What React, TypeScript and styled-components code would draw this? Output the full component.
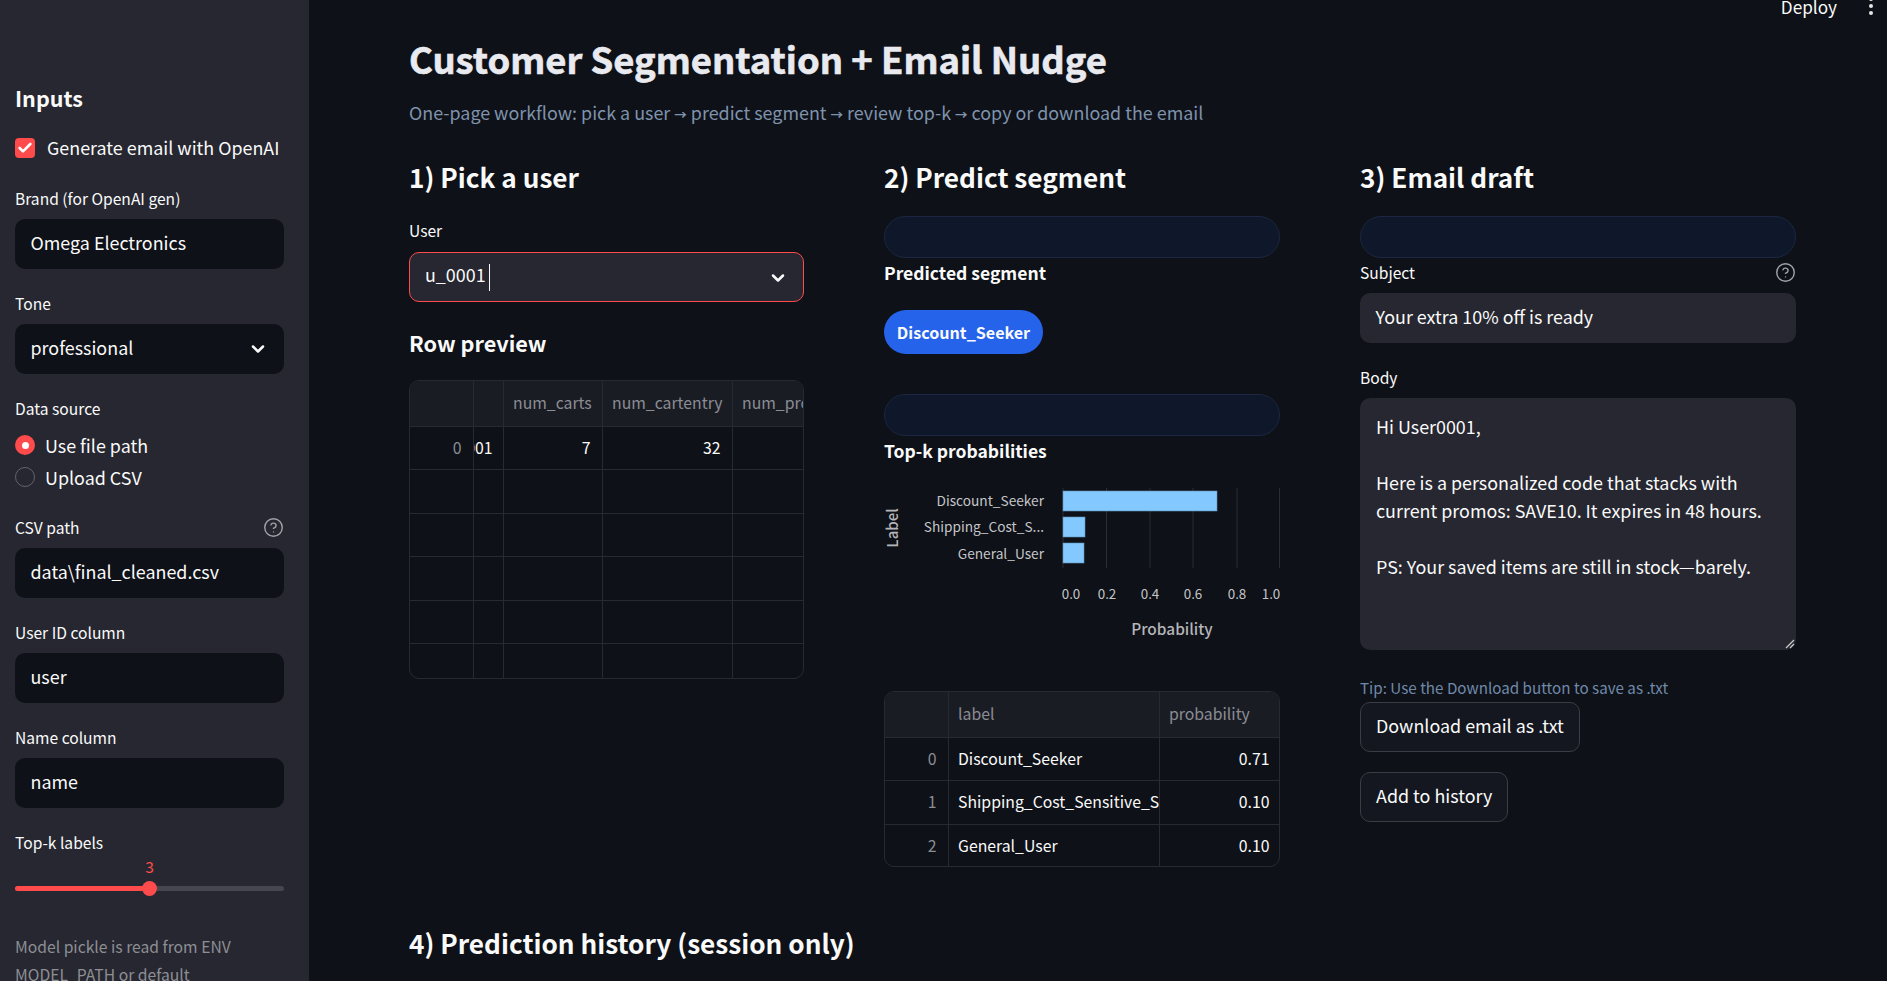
import React from "react";
import styled, { createGlobalStyle } from "styled-components";
import { ChevronDown, CircleHelp, Check } from "lucide-react";

const FONT = `"Noto Sans CJK SC", "Noto Sans", sans-serif`;

const GlobalStyle = createGlobalStyle`
  html, body { margin: 0; padding: 0; background: #0e1117; height: 100%; overflow: hidden; }
  * { box-sizing: border-box; }
  body { font-family: ${FONT}; color: #fafafa; }
`;

export default function App() {
  return (
    <Page>
      <GlobalStyle />
      <Sidebar>
        <SideTitle>Inputs</SideTitle>
        <CheckRow>
          <CheckBox><Check size={16} strokeWidth={4} color="#fff" /></CheckBox>
          <CheckText>Generate email with OpenAI</CheckText>
        </CheckRow>
        <Field><Label>Brand (for OpenAI gen)</Label><Box>Omega Electronics</Box></Field>
        <Field>
          <Label>Tone</Label>
          <Box>professional<Chevron size={20} strokeWidth={3} /></Box>
        </Field>
        <Field>
          <Label>Data source</Label>
          <div>
            <RadioRow><RadioDot $on />Use file path</RadioRow>
            <RadioRow><RadioDot />Upload CSV</RadioRow>
          </div>
        </Field>
        <Field>
          <Label>CSV path<Help size={21} strokeWidth={1.6} /></Label>
          <Box>data\final_cleaned.csv</Box>
        </Field>
        <Field><Label>User ID column</Label><Box>user</Box></Field>
        <Field><Label>Name column</Label><Box>name</Box></Field>
        <Field>
          <Label>Top-k labels</Label>
          <SliderValue>3</SliderValue>
          <SliderTrack><SliderFill /><SliderThumb /></SliderTrack>
        </Field>
        <SideNote>Model pickle is read from ENV<br />MODEL_PATH or default</SideNote>
      </Sidebar>

      <Main>
        <Toolbar>
          Deploy
          <Dots><i /><i /><i /></Dots>
        </Toolbar>
        <Title>Customer Segmentation + Email Nudge</Title>
        <Subtitle>
          One-page workflow: pick a user <Arrow>→</Arrow> predict segment <Arrow>→</Arrow> review top-k <Arrow>→</Arrow> copy or download the email
        </Subtitle>

        <Columns>
          <Column>
            <Heading>1) Pick a user</Heading>
            <UserField>
              <UserLabel>User</UserLabel>
              <UserSelect>
                <span>u_0001<Caret /></span>
                <Chevron size={20} strokeWidth={3} />
              </UserSelect>
            </UserField>
            <SubHeading>Row preview</SubHeading>
            <TableWrap>
              <DataTable $width={443}>
                <colgroup>
                  <col width={63} /><col width={30} /><col width={99} /><col width={130} /><col width={121} />
                </colgroup>
                <thead>
                  <tr><Th /><Th /><Th>num_carts</Th><Th>num_cartentry</Th><Th>num_products</Th></tr>
                </thead>
                <tbody>
                  <tr>
                    <IndexCell>0</IndexCell>
                    <ClipCell><Clip>u_0001</Clip></ClipCell>
                    <Td $num>7</Td>
                    <Td $num>32</Td>
                    <Td />
                  </tr>
                  {[0, 1, 2, 3, 4].map((i) => (
                    <tr key={i}><IndexCell /><Td /><Td /><Td /><Td /></tr>
                  ))}
                </tbody>
              </DataTable>
            </TableWrap>
          </Column>

          <Column>
            <Heading>2) Predict segment</Heading>
            <EmptyPill />
            <BoldLine>Predicted segment</BoldLine>
            <SegmentBadge>Discount_Seeker</SegmentBadge>
            <EmptyPill />
            <BoldLine>Top-k probabilities</BoldLine>
            <ChartSvg width="396" height="176" viewBox="0 0 396 176">
              {[179, 222.5, 266, 309, 353, 395.5].map((x) => (
                <line key={x} x1={x} x2={x} y1="16" y2="96" stroke="#2a2d36" strokeWidth="1" />
              ))}
              <rect x="179" y="19" width="154" height="20" fill="#83c9ff" stroke="#5f8fb4" strokeWidth="0.6" />
              <rect x="179" y="45" width="22" height="20" fill="#83c9ff" stroke="#5f8fb4" strokeWidth="0.6" />
              <rect x="179" y="71" width="21" height="20" fill="#83c9ff" stroke="#5f8fb4" strokeWidth="0.6" />
              <g fontFamily={FONT} fontSize="13.7" fill="#c4c5c9" textAnchor="end">
                <text x="160" y="34">Discount_Seeker</text>
                <text x="160" y="60">Shipping_Cost_S...</text>
                <text x="160" y="87">General_User</text>
              </g>
              <g fontFamily={FONT} fontSize="13.4" fill="#c4c5c9" textAnchor="middle">
                <text x="187" y="127">0.0</text>
                <text x="223" y="127">0.2</text>
                <text x="266" y="127">0.4</text>
                <text x="309" y="127">0.6</text>
                <text x="353" y="127">0.8</text>
                <text x="387" y="127">1.0</text>
              </g>
              <text x="288" y="163" fontFamily={FONT} fontSize="15.4" fontWeight="500" fill="#b4b5b9" textAnchor="middle">Probability</text>
              <text transform="translate(14 56) rotate(-90)" fontFamily={FONT} fontSize="15" fontWeight="500" fill="#b4b5b9" textAnchor="middle">Label</text>
            </ChartSvg>
            <ProbWrap>
              <DataTable $width={396}>
                <colgroup><col width={63} /><col width={211} /><col width={122} /></colgroup>
                <thead><tr><Th /><Th>label</Th><Th>probability</Th></tr></thead>
                <tbody>
                  <tr><IndexCell>0</IndexCell><Td>Discount_Seeker</Td><Td $num>0.71</Td></tr>
                  <tr><IndexCell>1</IndexCell><Td>Shipping_Cost_Sensitive_Shopper</Td><Td $num>0.10</Td></tr>
                  <tr><IndexCell>2</IndexCell><Td>General_User</Td><Td $num>0.10</Td></tr>
                </tbody>
              </DataTable>
            </ProbWrap>
          </Column>

          <Column>
            <Heading>3) Email draft</Heading>
            <EmptyPill />
            <SubjectLabel>Subject<Help size={21} strokeWidth={1.6} /></SubjectLabel>
            <Box $raised>Your extra 10% off is ready</Box>
            <BodyField>
              <Label>Body</Label>
              <BodyArea>
                {"Hi User0001,\n\nHere is a personalized code that stacks with current promos: SAVE10. It expires in 48 hours.\n\nPS: Your saved items are still in stock—barely."}
                <Grip width="10" height="10" viewBox="0 0 10 10">
                  <path d="M1 9 L9 1 M5 9 L9 5" stroke="#c8c8c8" strokeWidth="1.3" />
                </Grip>
              </BodyArea>
            </BodyField>
            <Tip>Tip: Use the Download button to save as .txt</Tip>
            <ActionButton>Download email as .txt</ActionButton>
            <ActionButton>Add to history</ActionButton>
          </Column>
        </Columns>

        <HistoryHeading>4) Prediction history (session only)</HistoryHeading>
      </Main>
    </Page>
  );
}

const Page = styled.div`
  display: flex;
  width: 1887px;
  height: 981px;
  overflow: hidden;
  background: #0e1117;
`;

const Sidebar = styled.aside`
  width: 309px;
  flex: none;
  background: #262730;
  padding: 81px 25px 0 15px;
`;

const SideTitle = styled.h2`
  margin: 0 0 23px;
  font-size: 21.5px;
  line-height: 34px;
  font-weight: 600;
`;

const CheckRow = styled.div`
  display: flex;
  align-items: center;
  gap: 12px;
  height: 20px;
  margin-bottom: 31px;
  font-size: 17.9px;
`;

const CheckText = styled.span`
  padding-bottom: 2px;
`;

const CheckBox = styled.span`
  width: 20px;
  height: 20px;
  border-radius: 4px;
  background: #ff4b4b;
  display: flex;
  align-items: center;
  justify-content: center;
`;

const Field = styled.div`
  margin-bottom: 25px;
`;

const Label = styled.div`
  display: flex;
  align-items: center;
  justify-content: space-between;
  height: 20px;
  margin-bottom: 10px;
  padding-bottom: 2px;
  font-size: 15.6px;
  line-height: 20px;
  color: #fafafa;
`;

const SubjectLabel = styled(Label)`
  margin-top: 5px;
`;

const UserLabel = styled(Label)`
  margin-bottom: 11px;
`;

const Help = styled(CircleHelp)`
  color: #a3a4a9;
`;

const Chevron = styled(ChevronDown)`
  margin-bottom: -4px;
`;

const Box = styled.div<{ $raised?: boolean }>`
  display: flex;
  align-items: center;
  justify-content: space-between;
  height: 50px;
  padding: 0 16px 4px 15.5px;
  border-radius: 10px;
  background: ${(p) => (p.$raised ? "#262730" : "#0e1117")};
  font-size: 17.9px;
  color: #fafafa;
`;

const RadioRow = styled.div`
  display: flex;
  align-items: center;
  gap: 10px;
  height: 32px;
  font-size: 17.9px;
`;

const RadioDot = styled.span<{ $on?: boolean }>`
  width: 20px;
  height: 20px;
  border-radius: 50%;
  background: ${(p) => (p.$on ? "#ff4b4b" : "transparent")};
  border: ${(p) => (p.$on ? "none" : "1px solid #62636b")};
  display: flex;
  align-items: center;
  justify-content: center;
  &::after {
    content: "";
    display: ${(p) => (p.$on ? "block" : "none")};
    width: 7px;
    height: 7px;
    border-radius: 50%;
    background: #fff;
  }
`;

const SliderValue = styled.div`
  margin-top: -7px;
  text-align: center;
  font-size: 15.6px;
  line-height: 20px;
  color: #ff4b4b;
`;

const SliderTrack = styled.div`
  position: relative;
  height: 5px;
  margin-top: 10px;
  border-radius: 3px;
  background: #45464f;
`;

const SliderFill = styled.div`
  width: 50%;
  height: 100%;
  border-radius: 3px;
  background: #ff4b4b;
`;

const SliderThumb = styled.div`
  position: absolute;
  left: 127px;
  top: -5px;
  width: 15px;
  height: 15px;
  border-radius: 50%;
  background: #ff4b4b;
`;

const SideNote = styled.div`
  margin-top: 42px;
  font-size: 15.7px;
  line-height: 28px;
  color: #8e8f95;
`;

const Main = styled.main`
  position: relative;
  flex: 1;
  min-width: 0;
  padding: 30px 91px 0 100px;
`;

const Toolbar = styled.div`
  position: absolute;
  top: -5px;
  right: 14px;
  display: flex;
  align-items: center;
  gap: 32px;
  font-size: 17.2px;
  line-height: 24px;
`;

const Dots = styled.span`
  display: flex;
  flex-direction: column;
  gap: 3px;
  margin-top: -3px;
  i {
    width: 4px;
    height: 4px;
    border-radius: 50%;
    background: #e6e6e6;
  }
`;

const Title = styled.h1`
  margin: 0;
  font-size: 36.4px;
  line-height: 56px;
  font-weight: 700;
  color: #e9eaef;
  -webkit-text-stroke: 0.6px #e9eaef;
`;

const Subtitle = styled.p`
  margin: 12px 0 0;
  font-size: 17.9px;
  line-height: 28px;
  color: #7f93ad;
`;

const Arrow = styled.span`
  font-size: 12.5px;
  font-weight: 700;
`;

const Columns = styled.div`
  display: grid;
  grid-template-columns: 395px 396px 436px;
  column-gap: 80px;
  margin-top: 29px;
`;

const Column = styled.div`
  min-width: 0;
`;

const Heading = styled.h3`
  margin: 0 0 20px;
  font-size: 26.2px;
  line-height: 38px;
  font-weight: 600;
`;

const UserField = styled.div`
  margin-top: 25px;
`;

const UserSelect = styled.div`
  display: flex;
  align-items: center;
  justify-content: space-between;
  height: 50px;
  padding: 0 15px 2px 15px;
  border: 1px solid #ff4b4b;
  border-radius: 10px;
  background: #262730;
  font-size: 17.9px;
`;

const Caret = styled.span`
  display: inline-block;
  width: 1px;
  height: 27px;
  margin-left: 3px;
  vertical-align: middle;
  background: #fafafa;
`;

const SubHeading = styled.h4`
  margin: 24px 0 20px;
  font-size: 21.7px;
  line-height: 34px;
  font-weight: 600;
`;

const TableWrap = styled.div`
  height: 299px;
  border: 1px solid #262a33;
  border-radius: 10px;
  overflow: hidden;
`;

const ProbWrap = styled(TableWrap)`
  height: 176px;
  margin-top: 43px;
`;

const DataTable = styled.table<{ $width: number }>`
  table-layout: fixed;
  border-collapse: collapse;
  width: ${(p) => p.$width}px;
  font-size: 15.8px;
`;

const Th = styled.th`
  height: 45px;
  padding: 0 2px 1px 9.5px;
  text-align: left;
  font-weight: 400;
  color: #8b8d94;
  background: #1a1c24;
  border: 1px solid #262a33;
  border-top: none;
  border-left: none;
  white-space: nowrap;
  overflow: hidden;
`;

const Td = styled.td<{ $num?: boolean }>`
  height: 43.6px;
  padding: ${(p) => (p.$num ? "0 11px 1px 2px" : "0 2px 1px 9.5px")};
  text-align: ${(p) => (p.$num ? "right" : "left")};
  color: #fafafa;
  border: 1px solid #262a33;
  border-left: none;
  white-space: nowrap;
  overflow: hidden;
`;

const IndexCell = styled(Td)`
  padding: 0 11px 1px 2px;
  text-align: right;
  color: #8b8d94;
`;

const ClipCell = styled(Td)`
  padding: 0 10px 1px 0;
`;

const Clip = styled.div`
  display: flex;
  justify-content: flex-end;
  overflow: hidden;
`;

const EmptyPill = styled.div`
  height: 42px;
  border: 1px solid #1b2740;
  border-radius: 21px;
  background: #0f172a;
`;

const BoldLine = styled.div`
  margin-top: 4px;
  height: 22px;
  font-size: 17.5px;
  line-height: 22px;
  font-weight: 600;
`;

const SegmentBadge = styled.div`
  display: flex;
  align-items: center;
  justify-content: center;
  width: 159px;
  height: 44px;
  margin: 26px 0 40px;
  border-radius: 22px;
  background: #2563eb;
  font-size: 16.1px;
  font-weight: 700;
`;

const ChartSvg = styled.svg`
  display: block;
  margin-top: 10px;
`;

const BodyField = styled.div`
  margin-top: 25px;
`;

const BodyArea = styled.div`
  position: relative;
  height: 252px;
  padding: 14px 16px;
  border-radius: 10px;
  background: #262730;
  font-size: 17.9px;
  line-height: 28px;
  white-space: pre-wrap;
`;

const Grip = styled.svg`
  position: absolute;
  right: 1px;
  bottom: 1px;
`;

const Tip = styled.div`
  margin-top: 26px;
  height: 24px;
  font-size: 15.2px;
  line-height: 22px;
  color: #7089ab;
`;

const ActionButton = styled.button`
  display: block;
  height: 50px;
  margin: 2px 0 20px;
  padding: 0 15px 4px;
  border: 1px solid #3b3d45;
  border-radius: 10px;
  background: #14171f;
  color: #fafafa;
  font-family: ${FONT};
  font-size: 17.9px;
`;

const HistoryHeading = styled.h3`
  position: absolute;
  left: 100px;
  top: 923px;
  margin: 0;
  font-size: 26.2px;
  line-height: 40px;
  font-weight: 600;
`;
